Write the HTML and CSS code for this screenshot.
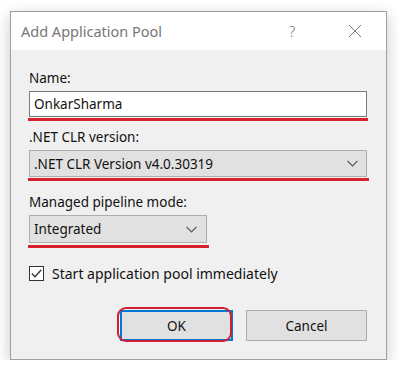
FILE: index.html
```html
<!DOCTYPE html>
<html lang="en">
<head>
    <meta charset="UTF-8">
    <meta name="viewport" content="width=device-width, initial-scale=1.0">
    <title>Add Application Pool</title>
    <link rel="stylesheet" href="styles.css">
</head>
<body>
    <div class="dialog">
        <div class="title-bar">
            <div class="title">Add Application Pool</div>
            <div class="help">?</div>
            <div class="close">
                <svg width="14" height="14" viewBox="0 0 14 14">
                    <path d="M1 1 L13 13 M13 1 L1 13" stroke="#777" stroke-width="1" fill="none"/>
                </svg>
            </div>
        </div>

        <div class="content">
            <div class="label">Name:</div>
            <div class="textbox">OnkarSharma</div>
            <div class="mark"></div>

            <div class="label gap">.NET CLR version:</div>
            <div class="combo">
                <span>.NET CLR Version v4.0.30319</span>
                <svg class="chevron" width="11" height="7" viewBox="0 0 11 7">
                    <path d="M0.5 0.8 L5.5 5.8 L10.5 0.8" stroke="#555" stroke-width="1.2" fill="none"/>
                </svg>
            </div>
            <div class="mark wide"></div>

            <div class="label gap-lg">Managed pipeline mode:</div>
            <div class="combo short">
                <span>Integrated</span>
                <svg class="chevron" width="11" height="7" viewBox="0 0 11 7">
                    <path d="M0.5 0.8 L5.5 5.8 L10.5 0.8" stroke="#555" stroke-width="1.2" fill="none"/>
                </svg>
            </div>
            <div class="mark short-mark"></div>

            <div class="check-row">
                <div class="checkbox">
                    <svg width="11" height="9" viewBox="0 0 11 9">
                        <path d="M0.8 4.5 L4 7.8 L10.3 0.8" stroke="#333" stroke-width="1.3" fill="none"/>
                    </svg>
                </div>
                <span class="check-label">Start application pool immediately</span>
            </div>

            <div class="buttons">
                <div class="btn ok">OK<div class="circle"></div></div>
                <div class="btn">Cancel</div>
            </div>
        </div>
    </div>
</body>
</html>
```

FILE: styles.css
```css
* {
    margin: 0;
    padding: 0;
    box-sizing: border-box;
    font-family: "Noto Sans", "Open Sans", Arial, sans-serif;
}

body {
    background-color: #fff;
    color: #000;
}

.dialog {
    margin: 11px 0 0 10px;
    width: 377px;
    height: 349px;
    border: 1px solid #a0a0a0;
    background: #f0f0f0;
    box-shadow: 0 4px 14px rgba(0, 0, 0, 0.22);
}

.title-bar {
    height: 38px;
    background: #fff;
    display: flex;
    align-items: center;
    padding-left: 10px;
    color: #777;
}

.title {
    flex: 1;
    font-size: 14.5px;
}

.help {
    font-size: 15px;
    font-weight: 300;
    width: 16px;
    margin-right: 43px;
}

.close {
    width: 24px;
    margin-right: 14px;
    display: flex;
    align-items: center;
}

.content {
    padding: 19px 19px 0 18px;
    font-size: 13.5px;
    color: #111;
}

.label {
    line-height: 19px;
    margin-bottom: 3px;
}

.label.gap {
    margin-top: 7px;
}

.label.gap-lg {
    margin-top: 12px;
}

.textbox {
    height: 26px;
    border: 1px solid #7a7a7a;
    background: #fff;
    padding-left: 4px;
    line-height: 24px;
}

.combo {
    height: 27px;
    border: 1px solid #adadad;
    background: #e1e1e1;
    padding: 0 8px 0 4px;
    display: flex;
    align-items: center;
    justify-content: space-between;
}

.combo.short {
    width: 178px;
    height: 28px;
    padding-right: 9px;
}

.mark {
    height: 3px;
    background: #d8202f;
    margin: 1px -1px 0 -1px;
}

.mark.wide {
    margin-right: -2px;
}

.mark.short-mark {
    width: 181px;
    margin-top: 2px;
}

.check-row {
    display: flex;
    align-items: center;
    margin-top: 17px;
    height: 16px;
}

.check-label {
    font-size: 14px;
}

.checkbox {
    width: 15px;
    height: 15px;
    border: 1px solid #333;
    background: #fff;
    display: flex;
    align-items: center;
    justify-content: center;
    margin-right: 8px;
}

.buttons {
    display: flex;
    justify-content: flex-end;
    gap: 13px;
    margin-top: 29px;
}

.btn {
    width: 121px;
    height: 31px;
    border: 1px solid #adadad;
    background: #e1e1e1;
    display: flex;
    align-items: center;
    justify-content: center;
    position: relative;
}

.btn.ok {
    width: 113px;
    border: 2px solid #0078d7;
}

.circle {
    position: absolute;
    left: -5px;
    top: -5px;
    right: -1px;
    bottom: -3px;
    border: 2.5px solid #d21f30;
    border-radius: 9px;
}
```
